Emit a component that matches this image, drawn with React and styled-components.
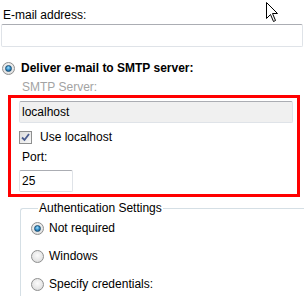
import React from "react";
import styled, { createGlobalStyle } from "styled-components";

const Global = createGlobalStyle`
  html, body { margin: 0; padding: 0; background: #fff; }
  body { font-family: "Liberation Sans", Arial, sans-serif; font-size: 12px; color: #000; }
`;

const Page = styled.div`
  position: relative;
  width: 304px;
  height: 296px;
  overflow: hidden;
`;

const Label = styled.div`
  line-height: 14px;
  height: 14px;
  padding-left: ${p => p.$left || 0}px;
  margin-top: ${p => p.$top || 0}px;
  color: ${p => (p.$disabled ? "#a3a3a3" : "#000")};
  white-space: nowrap;
`;

const TextBox = styled.div`
  box-sizing: border-box;
  height: ${p => p.$h || 23}px;
  width: ${p => p.$w}px;
  margin-left: ${p => p.$left || 0}px;
  margin-top: ${p => p.$top || 0}px;
  border: 1px solid #dfe3e8;
  border-top-color: #abadb3;
  border-radius: 2px;
  background: ${p => (p.$disabled ? "#f0f0f0" : "#fff")};
  display: flex;
  align-items: center;
  padding-left: 2px;
  line-height: 14px;
`;

const Row = styled.div`
  display: flex;
  align-items: center;
  gap: ${p => p.$gap || 6}px;
  height: 14px;
  margin-left: ${p => p.$left || 0}px;
  margin-top: ${p => p.$top || 0}px;
  font-weight: ${p => (p.$bold ? 700 : 400)};
  white-space: nowrap;
`;

const RadioCircle = styled.span`
  box-sizing: border-box;
  width: 13px;
  height: 13px;
  border-radius: 50%;
  border: 1px solid #8e8f8f;
  background: radial-gradient(circle at 50% 40%, #fbfbfb 0%, #e6e6e6 60%, #cfcfcf 100%);
  display: flex;
  align-items: center;
  justify-content: center;
  flex: none;
  &::after {
    content: "";
    display: ${p => (p.$checked ? "block" : "none")};
    width: 7px;
    height: 7px;
    border-radius: 50%;
    box-sizing: border-box;
    border: 1px solid #1b4f73;
    background: radial-gradient(circle at 45% 35%, #9de0ff 0%, #2c86c3 55%, #0e4d7e 100%);
  }
`;

const CheckSquare = styled.span`
  box-sizing: border-box;
  width: 13px;
  height: 13px;
  border: 1px solid #8e8f8f;
  background: linear-gradient(135deg, #dcdcdc 0%, #f8f8f8 100%);
  display: flex;
  align-items: center;
  justify-content: center;
  flex: none;
`;

const RedBox = styled.div`
  box-sizing: border-box;
  width: 292px;
  margin-left: 8px;
  margin-top: 1px;
  border: 3px solid #f00;
  padding: 3px 4px 2px 8px;
`;

const Group = styled.fieldset`
  margin: 4px 0 0 20px;
  padding: 5px 0 20px 10px;
  border: 1px solid #d5dfe5;
  border-right: none;
  border-bottom: none;
  border-top-left-radius: 3px;
  min-width: 0;
`;

const Legend = styled.legend`
  padding: 0 1px;
  margin-left: 7px;
  line-height: 14px;
`;

const Option = styled(Row)`
  margin-top: ${p => p.$top || 0}px;
  gap: 5px;
`;

const Cursor = styled.svg`
  position: absolute;
  left: 266px;
  top: 2px;
`;

function Radio({ checked, children, ...rest }) {
  return (
    <Option {...rest}>
      <RadioCircle $checked={checked} />
      <span>{children}</span>
    </Option>
  );
}

export default function App() {
  return (
    <Page>
      <Global />
      <Label $left={3} $top={8}>E-mail address:</Label>
      <TextBox $w={302} $left={1} $top={2} />
      <Row $left={2} $top={14} $bold $gap={6}>
        <RadioCircle $checked />
        <span>Deliver e-mail to SMTP server:</span>
      </Row>
      <Label $left={22} $top={5} $disabled>SMTP Server:</Label>
      <RedBox>
        <TextBox $w={274} $h={22} $disabled>localhost</TextBox>
        <Row $top={7} $gap={8}>
          <CheckSquare>
            <svg width="9" height="9" viewBox="0 0 9 9">
              <path d="M1 4.5 L3.5 7 L8 1" fill="none" stroke="#4a5c8f" strokeWidth="1.8" />
            </svg>
          </CheckSquare>
          <span>Use localhost</span>
        </Row>
        <Label $left={3} $top={6}>Port:</Label>
        <TextBox $w={54} $h={22} $top={6}>25</TextBox>
      </RedBox>
      <Group>
        <Legend>Authentication Settings</Legend>
        <Radio checked $top={1}>Not required</Radio>
        <Radio $top={14}>Windows</Radio>
        <Radio $top={14}>Specify credentials:</Radio>
      </Group>
      <Cursor width="13" height="21" viewBox="0 0 13 21">
        <path d="M0.5 0.5 L0.5 16.5 L4.5 12.5 L7.5 19.5 L9.5 18.5 L6.5 11.5 L11.5 11.5 Z" fill="#fff" stroke="#000" strokeWidth="1" strokeLinejoin="miter" />
      </Cursor>
    </Page>
  );
}
